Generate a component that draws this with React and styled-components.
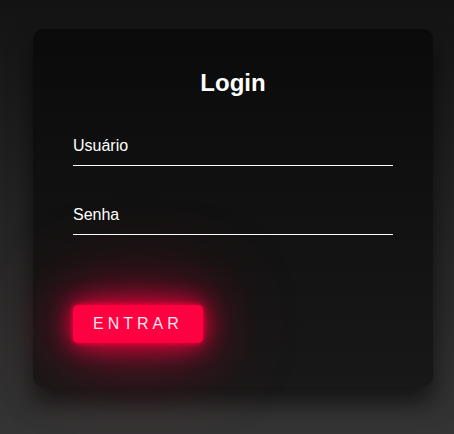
import React from 'react';
import styled, { createGlobalStyle } from 'styled-components';

const GlobalStyle = createGlobalStyle`
  html, body {
    margin: 0;
    padding: 0;
    height: 100%;
  }
  body {
    font-family: "Liberation Sans", Arial, sans-serif;
    background: linear-gradient(#131313, #343434);
    min-height: 434px;
  }
`;

const Page = styled.div`
  padding: 29px 0 0 33px;
`;

const Box = styled.div`
  width: 400px;
  padding: 40px 40px 44px;
  box-sizing: border-box;
  background: rgba(0, 0, 0, 0.5);
  border-radius: 10px;
  box-shadow: 0 15px 25px rgba(0, 0, 0, 0.6);
`;

const Title = styled.h2`
  margin: 0 0 30px;
  padding: 0;
  font-size: 24px;
  font-weight: bold;
  color: #fff;
  text-align: center;
`;

const Field = styled.div`
  position: relative;
`;

const Input = styled.input`
  display: block;
  width: 100%;
  box-sizing: border-box;
  padding: 10px 0;
  margin-bottom: 30px;
  font-family: inherit;
  font-size: 16px;
  line-height: 18px;
  color: #fff;
  border: none;
  border-bottom: 1px solid #fff;
  outline: none;
  background: transparent;
`;

const Label = styled.label`
  position: absolute;
  top: 0;
  left: 0;
  padding: 10px 0;
  font-size: 16px;
  line-height: 18px;
  color: #fff;
  pointer-events: none;
`;

const Button = styled.a`
  display: inline-block;
  margin-top: 40px;
  padding: 10px 20px;
  font-size: 16px;
  line-height: 18px;
  letter-spacing: 4px;
  text-transform: uppercase;
  text-decoration: none;
  color: #fde6ee;
  background: #ff0040;
  border-radius: 5px;
  box-shadow: 0 0 5px #ff0040, 0 0 25px #ff0040, 0 0 50px rgba(255, 0, 64, 0.7), 0 0 100px rgba(255, 0, 64, 0.45);
  cursor: pointer;
`;

const fields = [
  { id: 'user', label: 'Usuário', type: 'text' },
  { id: 'pass', label: 'Senha', type: 'password' },
];

export default function App() {
  return (
    <>
      <GlobalStyle />
      <Page>
        <Box>
          <Title>Login</Title>
          <form onSubmit={(e) => e.preventDefault()}>
            {fields.map((f) => (
              <Field key={f.id}>
                <Input id={f.id} type={f.type} required />
                <Label htmlFor={f.id}>{f.label}</Label>
              </Field>
            ))}
            <Button>Entrar</Button>
          </form>
        </Box>
      </Page>
    </>
  );
}
